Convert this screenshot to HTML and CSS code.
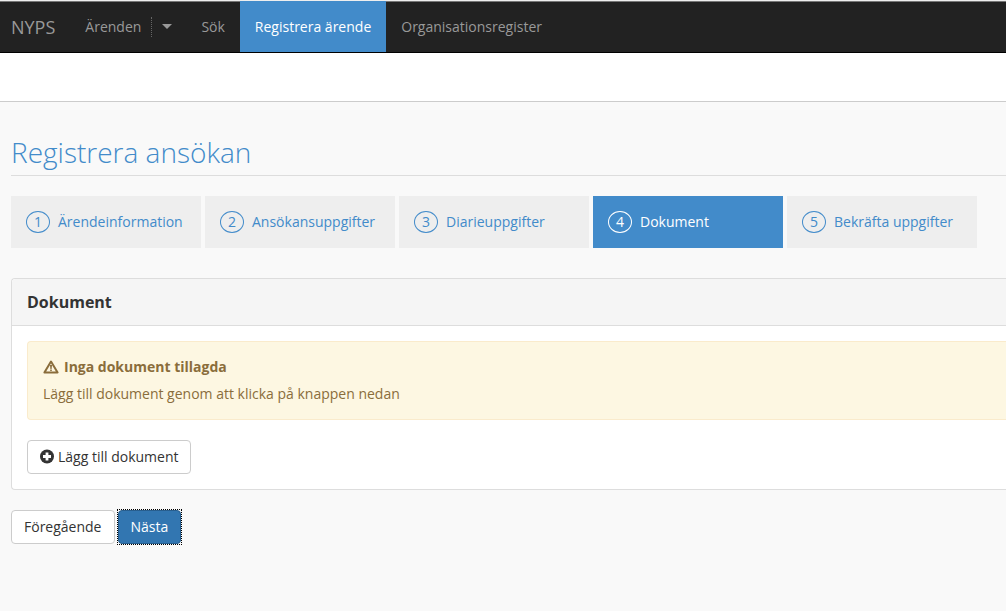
FILE: index.html
```html
<!DOCTYPE html>
<html lang="sv">
<head>
<meta charset="utf-8">
<meta name="viewport" content="width=device-width, initial-scale=1">
<title>NYPS – Registrera ansökan</title>
<link rel="stylesheet" href="styles.css">
</head>
<body>
<nav class="navbar">
  <a class="brand" href="#">NYPS</a>
  <a class="nav-link nav-link-split" href="#">Ärenden</a>
  <button class="nav-toggle" type="button" aria-label="Visa meny för ärenden"><span class="caret"></span></button>
  <a class="nav-link" href="#">Sök</a>
  <a class="nav-link active" href="#">Registrera ärende</a>
  <a class="nav-link" href="#">Organisationsregister</a>
</nav>
<div class="subbar"></div>
<main class="content">
  <h1 class="page-title">Registrera ansökan</h1>
  <ol class="steps">
    <li><a class="step" href="#"><span class="step-number">1</span>Ärendeinformation</a></li>
    <li><a class="step" href="#"><span class="step-number">2</span>Ansökansuppgifter</a></li>
    <li><a class="step" href="#"><span class="step-number">3</span>Diarieuppgifter</a></li>
    <li><a class="step current" href="#" aria-current="step"><span class="step-number">4</span>Dokument</a></li>
    <li><a class="step" href="#"><span class="step-number">5</span>Bekräfta uppgifter</a></li>
  </ol>
  <section class="panel">
    <h2 class="panel-heading">Dokument</h2>
    <div class="panel-body">
      <div class="alert">
        <h3 class="alert-title">
          <svg class="alert-icon" viewBox="0 0 16 14" aria-hidden="true">
            <path d="M8 1.500 14.600 12.500H1.400Z" fill="none" stroke="currentColor" stroke-width="2" stroke-linejoin="round"/>
            <path d="M7 5h2l-.4 4H7.400z M7.200 9.600h1.600v1.500H7.200z" fill="currentColor"/>
          </svg>
          Inga dokument tillagda
        </h3>
        <p class="alert-text">Lägg till dokument genom att klicka på knappen nedan</p>
      </div>
      <button class="button" type="button">
        <svg class="button-icon" viewBox="0 0 14 14" aria-hidden="true">
          <circle cx="7" cy="6.500" r="7" fill="currentColor"/>
          <path d="M5.600 2.500h2.800v2.600H11v2.800H8.400v2.600H5.600V7.900H3V5.100h2.600z" fill="#fff"/>
        </svg>
        Lägg till dokument
      </button>
    </div>
  </section>
  <div class="actions">
    <button class="button" type="button">Föregående</button>
    <button class="button primary" type="button">Nästa</button>
  </div>
</main>
</body>
</html>
```
FILE: styles.css
```css
* {
  box-sizing: border-box;
}

body {
  margin: 0;
  background: #f9f9f9;
  color: #333;
  font: 14px/20px "Open Sans", "Noto Sans", sans-serif;
  overflow-x: hidden;
}

a {
  color: #428bca;
  text-decoration: none;
}

.navbar {
  display: flex;
  align-items: stretch;
  height: 53px;
  border-top: 1px solid #eee;
  border-bottom: 1px solid #000;
  background: #222;
  box-shadow: inset 0 1px #777;
}

.brand,
.nav-link {
  display: flex;
  align-items: center;
  padding: 0 15px;
  color: #999;
}

.brand {
  padding-left: 11px;
  font-size: 18px;
}

.nav-link.active {
  background: #428bca;
  color: #fff;
}

.nav-link-split {
  padding-right: 10px;
}

.nav-toggle {
  align-self: center;
  display: flex;
  align-items: center;
  height: 20px;
  padding: 0 14px 0 10px;
  border: 0;
  border-left: 1px dotted #666;
  background: none;
}

.caret {
  border: 5px solid transparent;
  border-top: 5px solid #999;
  border-bottom: 0;
}

.subbar {
  height: 49px;
  border-bottom: 1px solid #ccc;
  background: #fff;
}

.content {
  padding: 33px 0 32px 11px;
}

.page-title {
  margin: 0 0 20px;
  padding-bottom: 5px;
  border-bottom: 1px solid #ddd;
  color: #428bca;
  font-size: 28px;
  font-weight: 300;
  line-height: 35px;
}

.steps {
  display: grid;
  grid-template-columns: repeat(5, minmax(0, 190px));
  gap: 4px;
  margin: 0 0 30px;
  padding: 0;
  list-style: none;
}

.step {
  display: flex;
  align-items: center;
  gap: 8px;
  height: 52px;
  padding: 0 15px;
  background: #eee;
}

.step.current {
  background: #428bca;
  color: #fff;
}

.step-number {
  flex: none;
  width: 24px;
  height: 22px;
  border: 1px solid currentColor;
  border-radius: 50%;
  line-height: 20px;
  text-align: center;
}

.panel {
  margin-bottom: 20px;
  border: 1px solid #ddd;
  border-right: 0;
  border-radius: 4px 0 0 4px;
  background: #fff;
}

.panel-heading {
  margin: 0;
  padding: 13px 15px;
  border-bottom: 1px solid #ddd;
  border-radius: 4px 0 0;
  background: #f5f5f5;
  font-size: 16px;
  font-weight: 700;
}

.panel-body {
  padding: 15px 0 15px 15px;
}

.alert {
  margin-bottom: 20px;
  padding: 15px;
  border: 1px solid #faebcc;
  border-right: 0;
  border-radius: 4px 0 0 4px;
  background: #fdf7e2;
  color: #8a6d3b;
}

.alert-title {
  display: flex;
  align-items: center;
  gap: 5px;
  margin: 0 0 7px;
  font-size: 14px;
  font-weight: 700;
}

.alert-icon {
  width: 16px;
  height: 14px;
}

.alert-text {
  margin: 0;
}

.button {
  display: inline-flex;
  align-items: center;
  gap: 4px;
  padding: 6px 12px;
  border: 1px solid #ccc;
  border-radius: 4px;
  background: #fff;
  color: #333;
  font: inherit;
}

.button-icon {
  width: 14px;
  height: 14px;
  overflow: visible;
}

.actions {
  display: flex;
  gap: 3px;
}

.button.primary {
  position: relative;
  border-color: #285e8e;
  background: #3276b1;
  color: #fff;
}

/* Square focus ring around the rounded button */
.button.primary::after {
  content: "";
  position: absolute;
  inset: -2px;
  border: 1px dotted #000;
}
```
